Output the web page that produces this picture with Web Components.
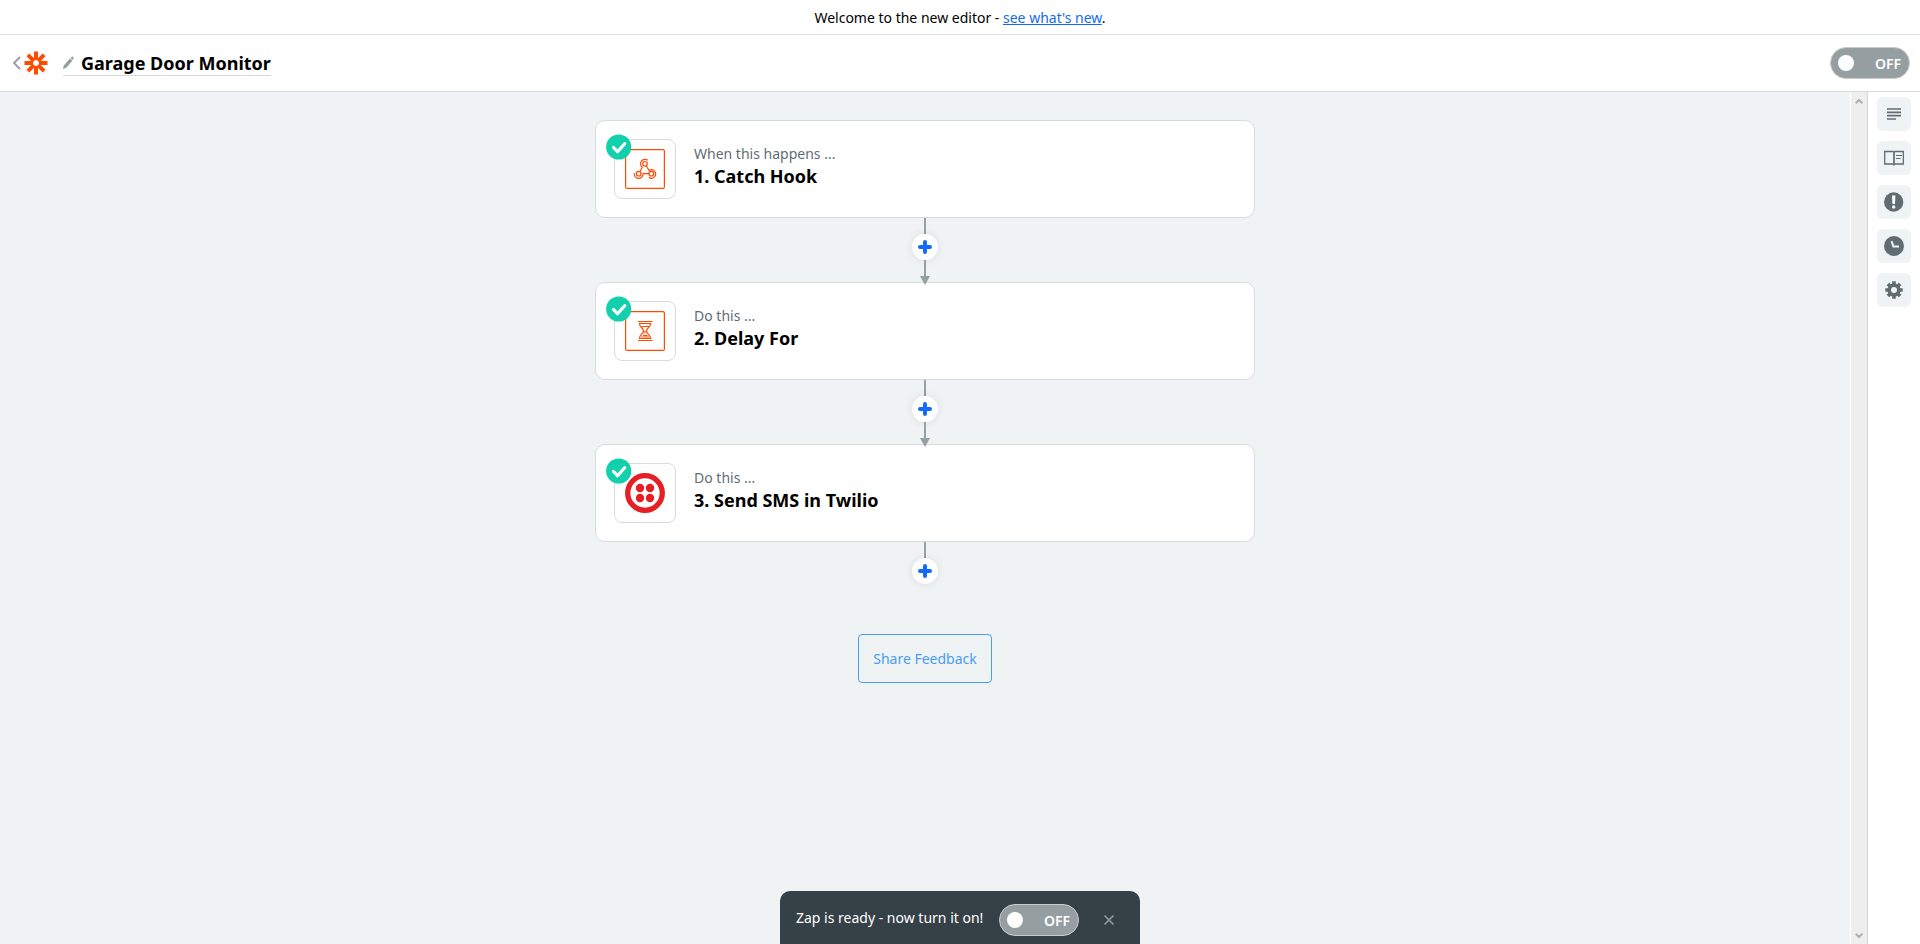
<!DOCTYPE html>
<html lang="en">
<head>
<meta charset="utf-8">
<title>Garage Door Monitor</title>
<style>
  html, body { height: 100%; margin: 0; }
  body { font: 14px/20px "Noto Sans", "Open Sans", sans-serif; color: #000; background: #fff; overflow: hidden; }
</style>
</head>
<body>
<zap-editor></zap-editor>

<script>
  const define = (name, html) => {
    const template = document.createElement('template');
    template.innerHTML = '<style>*{box-sizing:border-box}svg{display:block}button{font:inherit;margin:0;padding:0;border:0;background:none;cursor:pointer}</style>' + html;
    customElements.define(name, class extends HTMLElement {
      constructor() {
        super();
        this.attachShadow({ mode: 'open' }).append(template.content.cloneNode(true));
      }
    });
  };

  define('zap-banner', `
    <style>
      :host { display: block; padding: 8px 0 6px; border-bottom: 1px solid #d7dfdf; text-align: center; }
      a { color: #136bf5; }
    </style>
    Welcome to the new editor - <a href="#new">see what's new</a>.`);

  define('zap-toggle', `
    <style>
      :host { display: block; }
      label { position: relative; display: flex; align-items: center; justify-content: space-between; width: 80px; height: 32px; padding: 0 8px 0 7px; border: 1px solid #c8cccc; border-radius: 16px; background: #959ea1; color: #fff; font-weight: 600; font-size: 14px; cursor: pointer; }
      input { position: absolute; inset: 0; width: 100%; height: 100%; margin: 0; opacity: 0; cursor: pointer; }
      i { width: 16px; height: 16px; border-radius: 50%; background: #fff; }
      span { padding-top: 2px; }
    </style>
    <label><input type="checkbox" role="switch"><i></i><span>OFF</span></label>`);

  define('zap-header', `
    <style>
      :host { display: flex; align-items: center; height: 57px; padding: 0 10px 0 12px; border-bottom: 1px solid #d7dbe0; }
      .home { display: flex; align-items: center; gap: 2px; }
      .name { display: flex; align-items: center; gap: 7px; margin-left: 15px; border-bottom: 1px solid #d4d8dc; }
      h1 { margin: 0; font-size: 18px; line-height: 24px; font-weight: 700; }
      zap-toggle { margin-left: auto; }
    </style>
    <a class="home" href="#home" aria-label="Back to dashboard">
      <svg width="10" height="14" viewBox="0 0 10 14" fill="none" stroke="#95a0a2" stroke-width="2"><path d="M8 1 2 7l6 6"/></svg>
      <svg width="24" height="24" viewBox="0 0 24 24" stroke="#ff4a00" stroke-width="4"><path d="M12 0.500V9M12 15v8.500M0.500 12H9M15 12h8.500M3.900 3.900l6 6M14.100 14.100l6 6M20.100 3.900l-6 6M9.900 14.100l-6 6"/><circle cx="12" cy="12" r="4" fill="none" stroke-width="2"/></svg>
    </a>
    <div class="name">
      <svg width="11" height="14" viewBox="0 0 11 14" fill="#95a0a2"><path d="M0 13l.8-3.600L6.900 2.600l2.500 2.200L3.300 11.800zM7.500 2l1-1.100q.8-.7 1.700.1.900.9.200 1.800l-1 1.100z"/></svg>
      <h1>Garage Door Monitor</h1>
    </div>
    <zap-toggle></zap-toggle>`);

  define('zap-step', `
    <style>
      :host { display: flex; align-items: center; gap: 18px; height: 98px; padding: 0 18px; background: #fff; border: 1px solid #d7dbe0; border-radius: 10px; }
      .app { position: relative; display: grid; place-items: center; width: 62px; height: 60px; border: 1px solid #d9dbdd; border-radius: 8px; }
      .ok { position: absolute; left: -9px; top: -6px; }
      .text { padding-bottom: 6px; }
      p { margin: 0; color: #5f6d73; }
      h2 { margin: 0; font-size: 18px; line-height: 24px; font-weight: 700; }
    </style>
    <div class="app"><slot name="icon"></slot>
      <svg class="ok" width="26" height="26" viewBox="0 0 26 26"><circle cx="12.700" cy="13" r="12.600" fill="#13d0ac"/><path d="M7.500 13.500l4 4.200 7.200-8" fill="none" stroke="#fff" stroke-width="3.200" stroke-linecap="round" stroke-linejoin="round"/></svg>
    </div>
    <div class="text"><p><slot name="when"></slot></p><h2><slot></slot></h2></div>`);

  define('zap-link', `
    <style>
      :host { display: flex; flex-direction: column; align-items: center; height: 64px; }
      :host([last]) { height: 42px; }
      .line, button, .arrow { flex: none; }
      .line { width: 2px; height: 16px; background: #95a0a2; }
      button { width: 26px; height: 26px; padding: 6px; border-radius: 50%; background: #fff; box-shadow: 0 0 8px #00000018; }
      .arrow { width: 10px; height: 9px; background: #95a0a2; clip-path: polygon(0 0, 100% 0, 50% 100%); z-index: 1; }
      :host([last]) .tail { display: none; }
    </style>
    <div class="line"></div>
    <button aria-label="Add step"><svg width="14" height="14" viewBox="0 0 14 14" stroke="#136bf5" stroke-width="4" stroke-linecap="round"><path d="M7 2v10M2 7h10"/></svg></button>
    <div class="line tail"></div><div class="arrow tail"></div>`);

  define('zap-flow', `
    <style>
      :host { display: flex; flex-direction: column; align-items: center; padding-top: 28px; background: #eff3f4; border-right: 1px solid #fff; }
      .steps { width: 660px; max-width: 90%; }
      .share { margin-top: 50px; height: 49px; padding: 0 14px; border: 1px solid #499df3; border-radius: 4px; color: #499df3; }
    </style>
    <div class="steps">
      <zap-step><span slot="when">When this happens ...</span>1. Catch Hook
        <svg slot="icon" width="40" height="40" viewBox="0 0 40 40" fill="none" stroke="#ff4a00" stroke-width="1.200"><rect x="0.600" y="0.600" width="38.800" height="38.800" rx="1.500"/>
          <circle cx="20" cy="14.800" r="2.300"/><circle cx="13.700" cy="24.700" r="2.300"/><circle cx="26.300" cy="24.700" r="2.300"/>
          <path d="M22.800 11.300A4.400 4.400 0 0 0 17.200 18.200L15.200 22.500M21.300 17l2.900 4.600A4.100 4.100 0 1 1 23.900 28.200M9.300 24.200A4.400 4.400 0 1 0 18 24.700H24"/></svg>
      </zap-step>
      <zap-link></zap-link>
      <zap-step><span slot="when">Do this ...</span>2. Delay For
        <svg slot="icon" width="40" height="40" viewBox="0 0 40 40" fill="none" stroke="#ff4a00" stroke-width="1.200"><rect x="0.600" y="0.600" width="38.800" height="38.800" rx="1.500"/>
          <path d="M13 10.500h14.500M14 12.500h12.500M14 27.500h12.500M13 29.500h14.500M14.500 12.500c0 4.500 4 4 4 7.500s-4 3-4 7.500M25.500 12.500c0 4.500-4 4-4 7.500s4 3 4 7.500M16.500 15.500h7.500M18 24.500h4.500M16.500 26h7.500M20 19.500v3"/></svg>
      </zap-step>
      <zap-link></zap-link>
      <zap-step><span slot="when">Do this ...</span>3. Send SMS in Twilio
        <svg slot="icon" width="40" height="40" viewBox="0 0 40 40" fill="#e61e25"><circle cx="20" cy="20" r="17.300" fill="none" stroke="#e61e25" stroke-width="5.300"/><circle cx="15" cy="15" r="4.200"/><circle cx="25" cy="15" r="4.200"/><circle cx="15" cy="25" r="4.200"/><circle cx="25" cy="25" r="4.200"/></svg>
      </zap-step>
      <zap-link last></zap-link>
    </div>
    <button class="share">Share Feedback</button>`);

  define('zap-scrollbar', `
    <style>
      :host { display: flex; flex-direction: column; justify-content: space-between; align-items: center; padding: 5px 0 4px; background: #eee; }
    </style>
    <svg width="8" height="8" viewBox="0 0 8 8" fill="none" stroke="#b0b0b0" stroke-width="2"><path d="M.7 6.300L4 3l3.300 3.300"/></svg>
    <svg width="8" height="8" viewBox="0 0 8 8" fill="none" stroke="#b0b0b0" stroke-width="2"><path d="M.7 1.700L4 5l3.300-3.300"/></svg>`);

  define('zap-sidebar', `
    <style>
      :host { display: flex; flex-direction: column; gap: 10px; padding: 5px 9px; background: #fff; border-left: 1px solid #d5d7da; }
      button { display: grid; place-items: center; width: 34px; height: 34px; border-radius: 6px; background: #eff3f4; }
    </style>
    <button aria-label="Outline"><svg width="20" height="20" viewBox="0 0 20 20" stroke="#5f6d73" stroke-width="1.700"><path d="M3 5h14M3 8.300h14M3 11.700h14M3 15h9"/></svg></button>
    <button aria-label="Guide"><svg width="20" height="20" viewBox="0 0 20 20" fill="none" stroke="#5f6d73"><path d="M.7 3.500h8.300l1 .7 1-.7h8.300v12.500H11l-1 .8-1-.8H.7z" stroke-width="1.300"/><path d="M10 3.500v13.500" stroke-width="1.700"/><path d="M12 7.500h6M12 10.500h4.500"/></svg></button>
    <button aria-label="Issues"><svg width="20" height="20" viewBox="0 0 20 20"><circle cx="9.700" cy="10" r="9.700" fill="#5f6d73"/><path d="M8 3.500h3.400L11 12H8.400z" fill="#fff"/><circle cx="9.700" cy="15" r="1.700" fill="#fff"/></svg></button>
    <button aria-label="History"><svg width="20" height="20" viewBox="0 0 20 20"><circle cx="10" cy="10" r="10" fill="#5f6d73"/><path d="M7.500 5.200l2 5.300H15" fill="none" stroke="#eff3f4" stroke-width="2"/></svg></button>
    <button aria-label="Settings"><svg width="18" height="18" viewBox="0 0 18 18" fill="none" stroke="#5f6d73"><circle cx="9" cy="9" r="4.800" stroke-width="3.600"/><path d="M9 .3v3M9 14.700v3M.3 9h3M14.700 9h3M2.900 2.900L5 5M13 13l2.100 2.100M15.100 2.900L13 5M5 13l-2.100 2.100" stroke-width="3.600"/></svg></button>`);

  define('zap-toast', `
    <style>
      :host { display: flex; align-items: center; width: 360px; height: 53px; padding: 0 16px; border-radius: 10px 10px 0 0; background: #354047; color: #fff; }
      zap-toggle { margin: 4px 0 0 auto; }
      .close { width: 18px; height: 18px; padding: 4px; margin: 4px 6px 0 21px; }
    </style>
    <span>Zap is ready - now turn it on!</span>
    <zap-toggle></zap-toggle>
    <button class="close" aria-label="Close"><svg width="10" height="10" viewBox="0 0 10 10" stroke="#95a0a2" stroke-width="1.500"><path d="M.5.5l9 9M9.500.5l-9 9"/></svg></button>`);

  define('zap-editor', `
    <style>
      :host { display: grid; grid-template-rows: auto auto 1fr; height: 100vh; }
      main { display: grid; grid-template-columns: 1fr 16px 53px; min-height: 0; }
      zap-toast { position: fixed; bottom: 0; left: 50%; margin-left: -180px; }
    </style>
    <zap-banner></zap-banner>
    <zap-header></zap-header>
    <main><zap-flow></zap-flow><zap-scrollbar></zap-scrollbar><zap-sidebar></zap-sidebar></main>
    <zap-toast></zap-toast>`);
</script>
</body>
</html>
